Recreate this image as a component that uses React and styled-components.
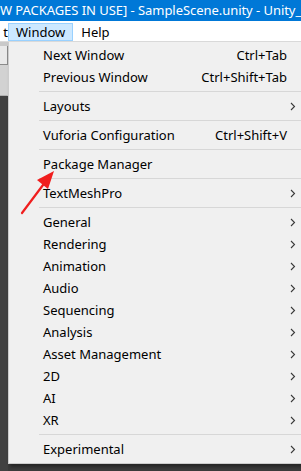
import styled, { createGlobalStyle } from "styled-components"

const GlobalStyle = createGlobalStyle`
  html, body {
    margin: 0;
    padding: 0;
    background: #3b3b3b;
  }
  body {
    width: 301px;
    height: 471px;
    overflow: hidden;
    font-family: "Noto Sans", "Open Sans", sans-serif;
  }
`

const Screen = styled.div`
  position: relative;
  width: 301px;
  height: 471px;
  overflow: hidden;
  display: flex;
  flex-direction: column;
  background: #3b3b3b;
`

const TitleBar = styled.div`
  height: 21px;
  flex: none;
  background: #0078d7;
  color: #fff;
  font-size: 13px;
  letter-spacing: -0.05px;
  line-height: 21px;
  white-space: nowrap;
  overflow: hidden;
`

const MenuBar = styled.div`
  height: 20px;
  flex: none;
  background: #fff;
  display: flex;
  align-items: stretch;
  font-size: 13px;
  color: #000;
  border-bottom: 1px solid #dadada;
`

const MenuBarItem = styled.div`
  display: flex;
  align-items: center;
  padding: 0 7px;
  margin-top: 2px;
  border: 1px solid ${p => (p.$active ? "#99d1ff" : "transparent")};
  background: ${p => (p.$active ? "#cce8ff" : "transparent")};
  line-height: 1;
`

const ClippedItem = styled.div`
  width: 8px;
  overflow: hidden;
  display: flex;
  align-items: center;
  justify-content: flex-end;
  margin-top: 2px;
`

const Workspace = styled.div`
  flex: 1;
  display: flex;
  align-items: flex-start;
`

const LeftStrip = styled.div`
  width: 8px;
  flex: none;
  align-self: stretch;
  display: flex;
  flex-direction: column;
`

const StripBlock = styled.div`
  height: ${p => p.$h}px;
  background: ${p => p.$bg};
  border-right: 1px solid ${p => p.$edge || "transparent"};
  border-bottom: 1px solid ${p => p.$line || "transparent"};
  flex: ${p => (p.$grow ? 1 : "none")};
`

const Menu = styled.div`
  flex: 1;
  background: #f0f0f0;
  border-left: 1px solid #cccccc;
  border-bottom: 1px solid #cccccc;
  padding: 2px 0 3px;
  box-shadow: 2px 3px 3px rgba(0, 0, 0, 0.35);
  font-size: 13px;
  color: #000;
`

const Item = styled.div`
  height: 22px;
  display: flex;
  align-items: center;
  padding-left: 34px;
  padding-right: ${p => (p.$sub ? 5 : 14)}px;
  white-space: nowrap;
`

const Label = styled.span`
  flex: 1;
`

const Shortcut = styled.span`
  margin-left: 16px;
`

const Separator = styled.div`
  height: 7px;
  display: flex;
  align-items: center;
  padding-left: 30px;
  &::after {
    content: "";
    flex: 1;
    height: 1px;
    background: #d7d7d7;
  }
`

const Chevron = () => (
  <svg width="6" height="9" viewBox="0 0 6 9">
    <path d="M1 1l3.5 3.5L1 8" fill="none" stroke="#3a3a3a" strokeWidth="1.1" />
  </svg>
)

const ArrowLayer = styled.svg`
  position: absolute;
  left: 0;
  top: 0;
  pointer-events: none;
`

const menu = [
  { label: "Next Window", shortcut: "Ctrl+Tab" },
  { label: "Previous Window", shortcut: "Ctrl+Shift+Tab" },
  "-",
  { label: "Layouts", sub: true },
  "-",
  { label: "Vuforia Configuration", shortcut: "Ctrl+Shift+V" },
  "-",
  { label: "Package Manager" },
  "-",
  { label: "TextMeshPro", sub: true },
  "-",
  { label: "General", sub: true },
  { label: "Rendering", sub: true },
  { label: "Animation", sub: true },
  { label: "Audio", sub: true },
  { label: "Sequencing", sub: true },
  { label: "Analysis", sub: true },
  { label: "Asset Management", sub: true },
  { label: "2D", sub: true },
  { label: "AI", sub: true },
  { label: "XR", sub: true },
  "-",
  { label: "Experimental", sub: true },
]

export default function App() {
  return (
    <Screen>
      <GlobalStyle />
      <TitleBar>W PACKAGES IN USE] - SampleScene.unity - Unity_EG</TitleBar>
      <MenuBar>
        <ClippedItem>t</ClippedItem>
        <MenuBarItem $active>Window</MenuBarItem>
        <MenuBarItem>Help</MenuBarItem>
      </MenuBar>
      <Workspace>
        <LeftStrip>
          <StripBlock $h={3} $bg="#c9c9c9" />
          <StripBlock $h={18} $bg="#e9e9e9" $edge="#8a8a8a" $line="#8a8a8a" />
          <StripBlock $h={30} $bg="#d2d2d2" $line="#b0b0b0" />
          <StripBlock $grow $bg="#414141" />
        </LeftStrip>
        <Menu>
          {menu.map((m, i) =>
            m === "-" ? (
              <Separator key={i} />
            ) : (
              <Item key={i} $sub={m.sub}>
                <Label>{m.label}</Label>
                {m.shortcut && <Shortcut>{m.shortcut}</Shortcut>}
                {m.sub && <Chevron />}
              </Item>
            )
          )}
        </Menu>
      </Workspace>
      <ArrowLayer width="301" height="471">
        <line x1="22" y1="213" x2="46" y2="181" stroke="#f01e1e" strokeWidth="2.2" strokeLinecap="round" />
        <polygon points="54,171 37,180 48,189" fill="#f01e1e" />
      </ArrowLayer>
    </Screen>
  )
}
